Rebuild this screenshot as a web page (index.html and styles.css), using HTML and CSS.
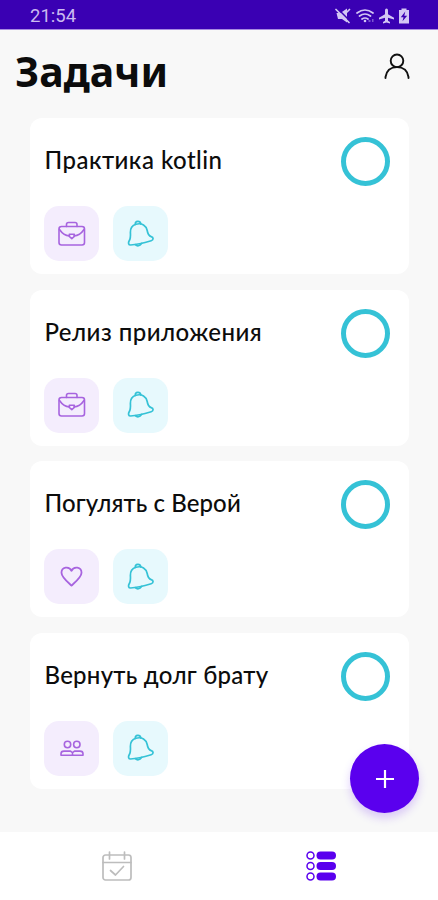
FILE: index.html
```html
<!DOCTYPE html>
<html lang="ru">
  <head>
    <meta charset="UTF-8" />
    <meta name="viewport" content="width=device-width, initial-scale=1.0" />
    <title>Задачи</title>
    <link rel="stylesheet" href="styles.css">
  </head>
  <body>
    <svg class="sprite">
      <symbol id="case" viewBox="0 0 28 26">
        <rect x="1" y="5.500" width="25.500" height="18.500" rx="2.500" />
        <path d="M8.500 5.500V3.500q0-2 2-2h6.500q2 0 2 2v2M1.500 8.500q4 6 10 6.500M26 8.500q-4 6-10 6.500" />
        <path d="M11.300 13.200h5v2.300l-2.500 2.200-2.500-2.200z" />
      </symbol>
      <symbol id="bell" viewBox="0 0 28 28">
        <path d="M9 4.200C5 5.500 3.200 8.500 3.400 12.500c.3 4 .2 6-1.200 8.300-1.200 2-.8 4.200 1.400 4.200 5.500-.2 14-2.200 20.600-4.200 2.600-.8 2.400-3.600 0-4.200-2.400-.6-3.400-2.400-4-6.100C19.300 5.600 15 2.600 9 4.200z" />
        <path d="M8.300 4.400c-.3-3.600 4.800-4.200 5.500-.4M8.300 24.600q3 3 6.500-1.300" />
      </symbol>
      <symbol id="heart" viewBox="0 0 24 22">
        <path d="M12 20.500C7 16 1.500 11.500 1.500 7c0-6 8-7.300 10.500-2 2.500-5.300 10.500-4 10.500 2 0 4.500-5.500 9-10.500 13.500z" />
      </symbol>
      <symbol id="people" viewBox="0 0 24 17">
        <circle cx="7.500" cy="4.500" r="3.200" />
        <circle cx="16.800" cy="4.500" r="3.200" />
        <path d="M1 15.200v-1.500q0-2.600 3-2.600h6.500l2 1.500 2-1.500H20q3 0 3 2.600v1.500zM12.500 12.600v2.600" />
      </symbol>
    </svg>

    <div class="status">
      <span class="time">21:54</span>
      <svg class="status-icons" viewBox="0 0 76 18">
        <path d="M1.500 6h4l6.500-4.500v14L7 12H3z" />
        <path class="cut" d="M2 1l13 13" />
        <path class="line" d="M1 2.500l13 13M12 5l2.500-2.500" />
        <path class="line" d="M22 6q8-6 16 0M24.500 9q5.500-4 11 0M27 12q3-2 6 0" />
        <circle cx="30" cy="14" r="1.300" />
        <path class="dim" d="M33.500 13h2v2h-2zM37 12h1.500v3H37z" />
        <path d="M51.500 1.500q1.500 0 1.500 2v3.700l6 3.600v1.700l-6-1.700v3l2 1.300v1.300l-3.500-.9-3.500.9v-1.300l2-1.300v-3l-6 1.700v-1.700l6-3.600V3.500q0-2 1.500-2z" />
        <path d="M64 3h2.500V1.500h5V3H74v13.500H64z" />
        <path class="bolt" d="M70.300 4.500l-4.500 5.800h2.700l-1 4 4.700-5.600h-2.900z" />
      </svg>
    </div>

    <header class="header">
      <h1>Задачи</h1>
      <svg class="profile" viewBox="0 0 26 26">
        <circle cx="13" cy="7.800" r="6.300" />
        <path d="M1.500 25v-1q1.500-9.900 11.500-9.900T24.500 24v1" />
      </svg>
    </header>

    <main class="tasks">
      <div class="card">
        <div class="card-top">
          <h2 class="wide">Практика kotlin</h2>
          <span class="check"></span>
        </div>
        <div class="chips">
          <span class="chip violet"><svg class="case"><use href="#case" /></svg></span>
          <span class="chip cyan"><svg class="bell"><use href="#bell" /></svg></span>
        </div>
      </div>

      <div class="card">
        <div class="card-top">
          <h2 class="wide">Релиз приложения</h2>
          <span class="check"></span>
        </div>
        <div class="chips">
          <span class="chip violet"><svg class="case"><use href="#case" /></svg></span>
          <span class="chip cyan"><svg class="bell"><use href="#bell" /></svg></span>
        </div>
      </div>

      <div class="card">
        <div class="card-top">
          <h2>Погулять с Верой</h2>
          <span class="check"></span>
        </div>
        <div class="chips">
          <span class="chip violet"><svg class="heart"><use href="#heart" /></svg></span>
          <span class="chip cyan"><svg class="bell"><use href="#bell" /></svg></span>
        </div>
      </div>

      <div class="card">
        <div class="card-top">
          <h2 class="medium">Вернуть долг брату</h2>
          <span class="check"></span>
        </div>
        <div class="chips">
          <span class="chip violet"><svg class="people"><use href="#people" /></svg></span>
          <span class="chip cyan"><svg class="bell"><use href="#bell" /></svg></span>
        </div>
      </div>
    </main>

    <button class="fab" aria-label="Добавить">
      <svg viewBox="0 0 18 18"><path d="M9 0v18M0 9h18" /></svg>
    </button>

    <nav class="nav">
      <a>
        <svg class="calendar" viewBox="0 0 30 30">
          <rect x="1" y="4" width="28" height="25" rx="2.500" />
          <path d="M1 11.500h28M7.500 1v7M22.500 1v7M8.500 19.500l5 4.500 8-8.500" />
        </svg>
      </a>
      <a>
        <svg class="list" viewBox="0 0 30 30">
          <circle cx="4.500" cy="4.500" r="3.500" />
          <circle cx="4.500" cy="15" r="3.500" />
          <circle cx="4.500" cy="25.500" r="3.500" />
          <rect x="10.500" y=".5" width="19.500" height="8" rx="4" />
          <rect x="10.500" y="11" width="19.500" height="8" rx="4" />
          <rect x="10.500" y="21.500" width="19.500" height="8" rx="4" />
        </svg>
      </a>
    </nav>
  </body>
</html>
```
FILE: styles.css
```css
:root {
  --bg: #f8f8f8;
  --primary: #5a00ee;
  --primary-dark: #3a00b3;
  --violet: #a764df;
  --cyan: #35c2d6;
}

* {
  box-sizing: border-box;
}

body {
  margin: 0;
  height: 900px;
  display: flex;
  flex-direction: column;
  position: relative;
  overflow: hidden;
  font-family: "Noto Sans", sans-serif;
  background: var(--bg);
  color: #0c0c0c;
}

svg {
  display: block;
  fill: none;
  stroke-linecap: round;
  stroke-linejoin: round;
}

.sprite {
  display: none;
}

/* status bar */
.status {
  flex: none;
  height: 30px;
  padding: 2px 27px 0 30px;
  display: flex;
  align-items: center;
  justify-content: space-between;
  background: var(--primary-dark);
  border-bottom: 1px solid #a88be0;
}

.time {
  font-family: Roboto, sans-serif;
  font-size: 18.5px;
  color: #cabaf0;
}

.status-icons {
  width: 76px;
  height: 18px;
  fill: #d3c6f4;
}

.status-icons .line {
  fill: none;
  stroke: #d3c6f4;
  stroke-width: 1.7;
}

.status-icons .cut {
  stroke: var(--primary-dark);
  stroke-width: 1.5;
}

.status-icons .dim {
  fill: #7a55cf;
}

.status-icons .bolt {
  fill: var(--primary-dark);
}

/* header */
.header {
  flex: none;
  height: 88px;
  padding: 0 28px 0 15px;
  display: flex;
  justify-content: space-between;
}

h1 {
  margin: 11px 0 0;
  font-size: 41px;
  line-height: 60px;
  font-weight: 700;
}

.profile {
  width: 26px;
  height: 26px;
  margin-top: 23px;
  stroke: #111;
  stroke-width: 1.9;
}

/* tasks */
.tasks {
  flex: 1;
  padding: 0 29.5px 0 30px;
  display: flex;
  flex-direction: column;
  gap: 15.5px;
}

.card {
  height: 156px;
  padding: 19px 19px 13px 14.5px;
  display: flex;
  flex-direction: column;
  justify-content: space-between;
  background: #fff;
  border-radius: 12px;
}

.card-top {
  display: flex;
  justify-content: space-between;
}

h2 {
  margin: 6px 0 0;
  font-family: Lato, "Noto Sans", sans-serif;
  font-size: 24px;
  line-height: 34px;
  font-weight: 500;
  letter-spacing: 0.1px;
  white-space: nowrap;
}

h2.medium {
  letter-spacing: 0.25px;
}

h2.wide {
  letter-spacing: 0.46px;
}

.check {
  width: 49px;
  height: 49px;
  border: 5px solid var(--cyan);
  border-radius: 50%;
}

.chips {
  display: flex;
  gap: 14px;
  margin-left: -0.5px;
}

.chip {
  width: 55px;
  height: 55px;
  display: flex;
  align-items: center;
  justify-content: center;
  border-radius: 15px;
}

.violet {
  background: #f4edfd;
  stroke: var(--violet);
  stroke-width: 1.6;
}

.cyan {
  background: #e7f9fd;
  stroke: var(--cyan);
  stroke-width: 1.7;
}

.case {
  width: 28px;
  height: 26px;
}

.bell {
  width: 28px;
  height: 28px;
}

.heart {
  width: 23px;
  height: 21px;
  stroke-width: 1.9;
}

.people {
  width: 24px;
  height: 17px;
}

/* add button */
.fab {
  position: absolute;
  right: 19px;
  bottom: 87px;
  width: 69px;
  height: 69px;
  display: flex;
  align-items: center;
  justify-content: center;
  border: none;
  border-radius: 50%;
  background: var(--primary);
  box-shadow: 0 5px 10px rgba(90, 0, 238, 0.2);
}

.fab svg {
  width: 18px;
  height: 18px;
  stroke: #fff;
  stroke-width: 2.2;
  stroke-linecap: butt;
}

/* bottom navigation */
.nav {
  flex: none;
  height: 68px;
  padding: 0 15px;
  display: grid;
  grid-template-columns: 1fr 1fr;
  place-items: center;
  background: #fff;
}

.calendar {
  width: 30px;
  height: 30px;
  stroke: #bdbdbd;
  stroke-width: 1.7;
}

.list {
  width: 30px;
  height: 30px;
  stroke: var(--primary);
  stroke-width: 1.5;
}

.list rect {
  fill: var(--primary);
  stroke: none;
}
```
